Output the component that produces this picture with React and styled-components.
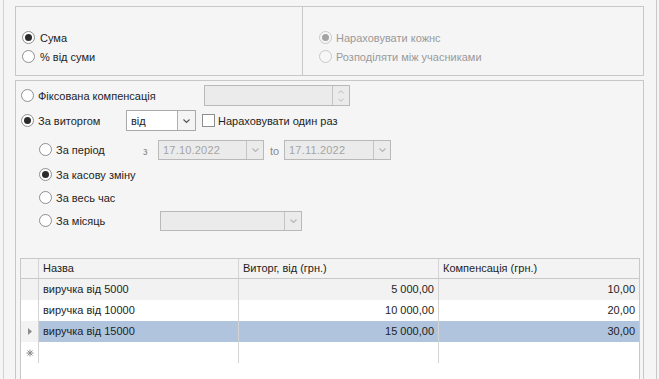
import React from 'react';
import styled, { createGlobalStyle } from 'styled-components';

const Global = createGlobalStyle`
  html, body { margin: 0; padding: 0; background: #f5f5f5; }
  body {
    font-family: "Liberation Sans", Arial, sans-serif;
    font-size: 11px;
    color: #1e1e1e;
    overflow: hidden;
  }
`;

const Frame = styled.div`
  margin-left: 3px;
  width: 654px;
  height: 379px;
  box-sizing: border-box;
  border-left: 1px solid #d2d2d2;
  border-right: 1px solid #c8c8c8;
  padding: 6px 12px 0 11px;
  display: flex;
  flex-direction: column;
`;

const TopBox = styled.div`
  height: 70px;
  box-sizing: border-box;
  border: 1px solid #c8c8c8;
  display: grid;
  grid-template-columns: 287px 1fr;
`;

const TopCol = styled.div`
  padding: 21px 0 0 ${(p) => p.$pad}px;
  border-right: ${(p) => (p.$divider ? '1px solid #c8c8c8' : 'none')};
  display: flex;
  flex-direction: column;
`;

const TopRow = styled.div`
  height: 19px;
  display: flex;
  align-items: center;
`;

const MainBox = styled.div`
  margin-top: 4px;
  flex: 1;
  border: 1px solid #c8c8c8;
  border-bottom: none;
  display: flex;
  flex-direction: column;
  min-height: 0;
`;

const Options = styled.div`
  padding: 4px 0 0 5px;
  display: flex;
  flex-direction: column;
`;

const Row = styled.div`
  height: 21px;
  margin-top: ${(p) => p.$gap || 0}px;
  padding-left: ${(p) => p.$indent || 0}px;
  display: flex;
  align-items: center;
`;

const RadioWrap = styled.div`
  display: flex;
  align-items: center;
  width: ${(p) => (p.$width ? `${p.$width}px` : 'auto')};
  flex-shrink: 0;
  color: ${(p) => (p.$disabled ? '#9a9a9a' : '#1e1e1e')};
`;

const Circle = styled.span`
  width: 13px;
  height: 13px;
  box-sizing: border-box;
  border-radius: 50%;
  border: 1px solid ${(p) => (p.$disabled ? '#c9c9c9' : '#8f8f8f')};
  background: ${(p) => (p.$disabled ? '#f7f7f7' : '#ffffff')};
  display: flex;
  align-items: center;
  justify-content: center;
  margin-right: ${(p) => p.$gap}px;
  flex-shrink: 0;
  &::after {
    content: '';
    display: ${(p) => (p.$checked ? 'block' : 'none')};
    width: 7px;
    height: 7px;
    border-radius: 50%;
    background: ${(p) => (p.$disabled ? '#a3a3a3' : '#2b2b2b')};
  }
`;

const Radio = ({ checked, disabled, children, width, gap = 4 }) => (
  <RadioWrap $width={width} $disabled={disabled}>
    <Circle $checked={checked} $disabled={disabled} $gap={gap} />
    <span>{children}</span>
  </RadioWrap>
);

const Field = styled.div`
  width: ${(p) => p.$w}px;
  height: ${(p) => p.$h || 20}px;
  box-sizing: border-box;
  border: 1px solid ${(p) => (p.$enabled ? '#a9a9a9' : '#b9b9b9')};
  background: ${(p) => (p.$enabled ? '#ffffff' : '#ebebeb')};
  color: ${(p) => (p.$enabled ? '#1e1e1e' : '#a5a5a5')};
  display: flex;
  align-items: stretch;
  flex-shrink: 0;
`;

const FieldText = styled.div`
  flex: 1;
  display: flex;
  align-items: center;
  padding-left: 4px;
  font-size: ${(p) => p.$size || 11}px;
  letter-spacing: ${(p) => p.$ls || 0}px;
`;

const FieldButton = styled.div`
  width: ${(p) => p.$w}px;
  border-left: 1px solid ${(p) => (p.$enabled ? '#b0b0b0' : '#c4c4c4')};
  background: ${(p) => (p.$enabled ? '#f4f4f4' : '#ebebeb')};
  display: flex;
  flex-direction: column;
  align-items: center;
  justify-content: center;
  color: ${(p) => (p.$enabled ? '#555' : '#b5b5b5')};
`;

const Chevron = ({ up, size = 7 }) => (
  <svg width={size} height={Math.round(size * 0.6)} viewBox="0 0 7 4" style={{ display: 'block' }}>
    <path
      d={up ? 'M0.5 3.5 L3.5 0.5 L6.5 3.5' : 'M0.5 0.5 L3.5 3.5 L6.5 0.5'}
      fill="none"
      stroke="currentColor"
      strokeWidth="1.1"
    />
  </svg>
);

const Spin = styled.div`
  display: flex;
  flex-direction: column;
  gap: 4px;
`;

const Check = styled.span`
  width: 13px;
  height: 13px;
  box-sizing: border-box;
  border: 1px solid #8f8f8f;
  background: #fff;
  margin: 0 3px 0 6px;
  flex-shrink: 0;
`;

const Small = styled.span`
  width: ${(p) => p.$w}px;
  flex-shrink: 0;
  color: #8a8a8a;
  font-size: ${(p) => p.$size || 11}px;
  padding-top: ${(p) => p.$pt || 0}px;
  margin-left: ${(p) => p.$ml || 0}px;
`;

const Grid = styled.div`
  margin: 27px 3px 0 4px;
  flex: 1;
  border: 1px solid #c8c8c8;
  border-bottom: none;
  background: #ffffff;
`;

const GridRow = styled.div`
  display: grid;
  grid-template-columns: 18px 200px 200px 200px;
  height: ${(p) => (p.$header ? 20 : 21)}px;
  box-sizing: border-box;
  border-bottom: ${(p) => (p.$header ? '1px solid #c8c8c8' : 'none')};
  background: ${(p) => p.$bg || '#ffffff'};
`;

const Cell = styled.div`
  box-sizing: border-box;
  border-right: ${(p) => (p.$last ? 'none' : '1px solid #d4d4d4')};
  display: flex;
  align-items: center;
  justify-content: ${(p) => (p.$right ? 'flex-end' : 'flex-start')};
  padding: 0 4px 2px;
  background: ${(p) => p.$bg || 'transparent'};
  white-space: nowrap;
`;

const Indicator = styled(Cell)`
  padding: 0;
  justify-content: center;
  color: #8a8a8a;
  font-size: 9px;
`;

const Arrow = () => (
  <svg width="4" height="7" viewBox="0 0 4 7" style={{ display: 'block' }}>
    <path d="M0 0 L4 3.5 L0 7 Z" fill="#8c8c8c" />
  </svg>
);

const Star = () => (
  <svg width="8" height="8" viewBox="0 0 8 8" style={{ display: 'block' }}>
    <g stroke="#8c8c8c" strokeWidth="1">
      <path d="M4 0.5 V7.5 M0.5 4 H7.5 M1.5 1.5 L6.5 6.5 M6.5 1.5 L1.5 6.5" />
    </g>
  </svg>
);

const rows = [
  { name: 'виручка від 5000', rev: '5 000,00', comp: '10,00', bg: '#f2f2f2' },
  { name: 'виручка від 10000', rev: '10 000,00', comp: '20,00', bg: '#ffffff' },
  { name: 'виручка від 15000', rev: '15 000,00', comp: '30,00', bg: '#b0c4de', current: true },
];

export default function App() {
  return (
    <>
      <Global />
      <Frame>
        <TopBox>
          <TopCol $pad={6} $divider>
            <TopRow>
              <Radio checked gap={5}>Сума</Radio>
            </TopRow>
            <TopRow>
              <Radio gap={5}>% від суми</Radio>
            </TopRow>
          </TopCol>
          <TopCol $pad={16}>
            <TopRow>
              <Radio checked disabled gap={4}>Нараховувати кожнс</Radio>
            </TopRow>
            <TopRow>
              <Radio disabled gap={4}>Розподіляти між учасниками</Radio>
            </TopRow>
          </TopCol>
        </TopBox>
        <MainBox>
          <Options>
            <Row>
              <Radio width={183}>Фіксована компенсація</Radio>
              <Field $w={146} $h={21}>
                <FieldText />
                <FieldButton $w={16}>
                  <Spin>
                    <Chevron up size={6} />
                    <Chevron size={6} />
                  </Spin>
                </FieldButton>
              </Field>
            </Row>
            <Row $gap={4}>
              <Radio checked width={105}>За виторгом</Radio>
              <Field $w={70} $h={21} $enabled>
                <FieldText>від</FieldText>
                <FieldButton $w={17} $enabled>
                  <Chevron size={7} />
                </FieldButton>
              </Field>
              <Check />
              <span>Нараховувати один раз</span>
            </Row>
            <Row $gap={8} $indent={18}>
              <Radio width={104}>За період</Radio>
              <Small $w={15} $size={10} $pt={3}>з</Small>
              <Field $w={106}>
                <FieldText $size={11} $ls={0.2}>17.10.2022</FieldText>
                <FieldButton $w={16}>
                  <Chevron size={7} />
                </FieldButton>
              </Field>
              <Small $w={14} $size={11} $pt={2} $ml={6}>to</Small>
              <Field $w={107}>
                <FieldText $size={11} $ls={0.2}>17.11.2022</FieldText>
                <FieldButton $w={16}>
                  <Chevron size={7} />
                </FieldButton>
              </Field>
            </Row>
            <Row $gap={4} $indent={18}>
              <Radio checked>За касову зміну</Radio>
            </Row>
            <Row $gap={2} $indent={18}>
              <Radio>За весь час</Radio>
            </Row>
            <Row $gap={2} $indent={18}>
              <Radio width={121}>За місяць</Radio>
              <Field $w={142}>
                <FieldText />
                <FieldButton $w={16}>
                  <Chevron size={7} />
                </FieldButton>
              </Field>
            </Row>
          </Options>
          <Grid>
            <GridRow $header $bg="#f3f3f3">
              <Indicator />
              <Cell>Назва</Cell>
              <Cell>Виторг, від (грн.)</Cell>
              <Cell $last>Компенсація (грн.)</Cell>
            </GridRow>
            {rows.map((r) => (
              <GridRow key={r.name} $bg={r.bg}>
                <Indicator $bg={r.current ? '#f3f3f3' : r.bg}>{r.current && <Arrow />}</Indicator>
                <Cell>{r.name}</Cell>
                <Cell $right>{r.rev}</Cell>
                <Cell $right $last>{r.comp}</Cell>
              </GridRow>
            ))}
            <GridRow>
              <Indicator><Star /></Indicator>
              <Cell />
              <Cell />
              <Cell $last />
            </GridRow>
          </Grid>
        </MainBox>
      </Frame>
    </>
  );
}
